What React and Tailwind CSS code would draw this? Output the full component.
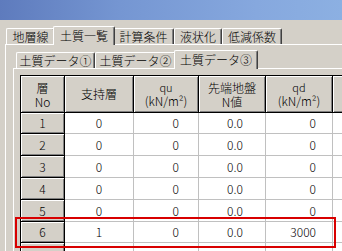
const rows = [
  { no: "1", s: "0", qu: "0", n: "0.0", qd: "0", h: "h-[21px]" },
  { no: "2", s: "0", qu: "0", n: "0.0", qd: "0", h: "h-[22px]" },
  { no: "3", s: "0", qu: "0", n: "0.0", qd: "0", h: "h-[22px]" },
  { no: "4", s: "0", qu: "0", n: "0.0", qd: "0", h: "h-[22px]" },
  { no: "5", s: "0", qu: "0", n: "0.0", qd: "0", h: "h-[22px]" },
  { no: "6", s: "1", qu: "0", n: "0.0", qd: "3000", h: "h-[21px]" },
  { no: "", s: "", qu: "", n: "", qd: "", h: "h-[22px]" },
];

function Tab({ w, children }) {
  return (
    <div
      className={`${w} h-[16px] flex items-center justify-center border-t border-l border-white border-r border-r-[#404040] rounded-t-[2px] shadow-[inset_-1px_0_0_#808080] pt-[1px]`}
    >
      {children}
    </div>
  );
}

function SelTab({ w, children }) {
  return (
    <div
      className={`${w} h-[19px] -mx-[2px] -mb-px relative z-10 bg-[#d4d0c8] flex items-start justify-center pt-[3px] border-t border-l border-white border-r border-r-[#404040] rounded-t-[2px] shadow-[inset_-1px_0_0_#808080]`}
    >
      {children}
    </div>
  );
}

const hdr =
  "bg-[#d4d0c8] border-r border-b border-black shadow-[inset_1px_1px_0_#ffffff,inset_-1px_-1px_0_#808080] flex flex-col items-center justify-center gap-[1px] shrink-0";
const cell = "bg-white border-r border-b border-[#c0c0c0] flex items-center shrink-0";

export default function App() {
  return (
    <div className="relative w-[342px] h-[251px] overflow-hidden bg-[#d4d0c8] text-[12px] leading-none font-light text-black font-['Noto_Sans_CJK_JP',sans-serif]">
      {/* title bar */}
      <div className="h-[20px] bg-[linear-gradient(90deg,#5e7bbd,#7596d2_35%,#86a8de_75%,#8cb0e2)]" />

      {/* outer tabs */}
      <div className="flex items-end h-[24px] pl-[6px]">
        <Tab w="w-[49px]">地層線</Tab>
        <SelTab w="w-[62px]">土質一覧</SelTab>
        <Tab w="w-[61px]">計算条件</Tab>
        <Tab w="w-[48px]">液状化</Tab>
        <Tab w="w-[60px]">低減係数</Tab>
      </div>

      {/* outer panel */}
      <div className="ml-[5px] border-l border-t border-white h-[300px]">
        <div className="ml-[7px]">
          {/* inner tabs */}
          <div className="flex items-end h-[23px] pl-[3px]">
            <Tab w="w-[79px]">土質データ①</Tab>
            <Tab w="w-[81px]">土質データ②</Tab>
            <SelTab w="w-[84px]">土質データ③</SelTab>
          </div>

          {/* inner panel */}
          <div className="border-l border-t border-white h-[300px] pl-[6px] pt-[6px]">
            <div className="border-l border-t border-black w-[400px]">
              {/* header */}
              <div className="flex h-[37px]">
                <div className={`${hdr} w-[44px]`}>
                  <span className="leading-[13px]">層</span>
                  <span className="leading-[13px]">No</span>
                </div>
                <div className={`${hdr} w-[69px]`}>支持層</div>
                <div className={`${hdr} w-[65px]`}>
                  <span className="text-[11px] leading-[12px]">qu</span>
                  <span className="leading-[13px]">(kN/m²)</span>
                </div>
                <div className={`${hdr} w-[67px]`}>
                  <span className="leading-[13px]">先端地盤</span>
                  <span className="leading-[13px]">N値</span>
                </div>
                <div className={`${hdr} w-[67px]`}>
                  <span className="text-[11px] leading-[12px]">qd</span>
                  <span className="leading-[13px]">(kN/m²)</span>
                </div>
                <div className={`${hdr} w-[60px]`} />
              </div>
              {rows.map((r, i) => (
                <div key={i} className={`flex ${r.h}`}>
                  <div className={`${hdr} w-[44px]`}>{r.no}</div>
                  <div className={`${cell} w-[69px] justify-center`}>{r.s}</div>
                  <div className={`${cell} w-[65px] justify-end pr-[19px]`}>{r.qu}</div>
                  <div className={`${cell} w-[67px] justify-center pl-[6px]`}>{r.n}</div>
                  <div className={`${cell} w-[67px] justify-end pr-[16px]`}>{r.qd}</div>
                  <div className={`${cell} w-[60px]`} />
                </div>
              ))}
            </div>
          </div>
        </div>
      </div>

      {/* highlight box */}
      <div className="absolute left-[15px] top-[217px] w-[321px] h-[31px] border-2 border-[#d80000]" />
    </div>
  );
}
